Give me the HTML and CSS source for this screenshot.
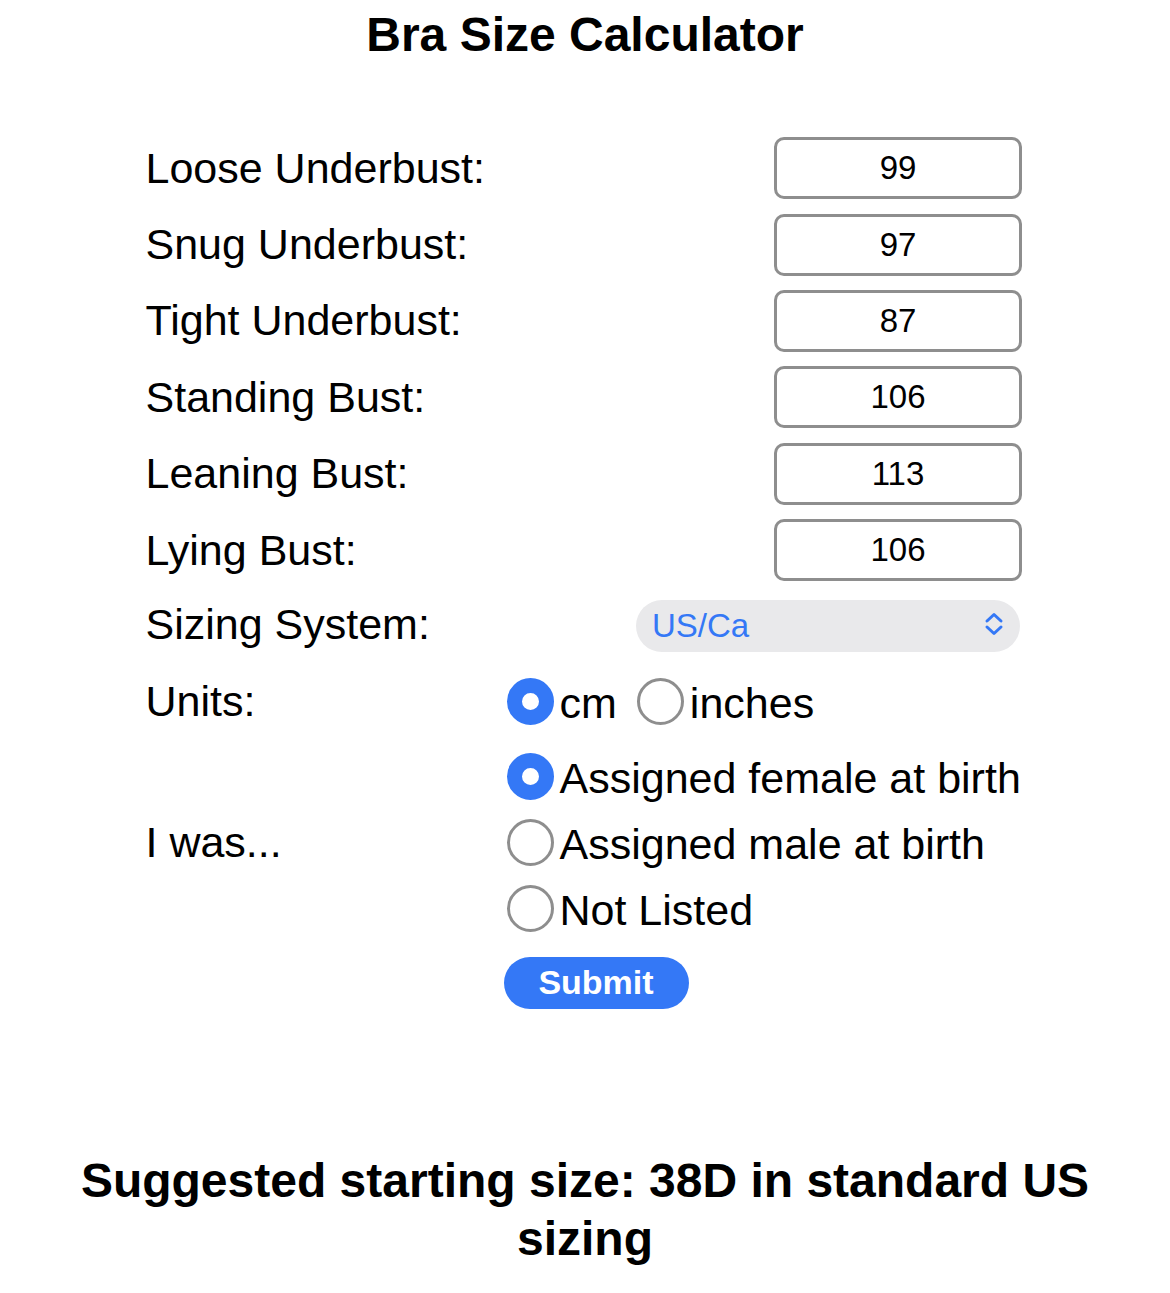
FILE: index.html
```html
<!DOCTYPE html>
<html lang="en">
<head>
    <meta charset="UTF-8">
    <meta name="viewport" content="width=device-width, initial-scale=1.0">
    <title>Bra Size Calculator</title>
    <link rel="stylesheet" href="styles.css">
</head>
<body>
    <h1 class="title">Bra Size Calculator</h1>

    <form class="calc-form" onsubmit="return false;">
        <label class="field-label" for="loose">Loose Underbust:</label>
        <div class="field-control"><input type="text" class="measure" id="loose" value="99"></div>

        <label class="field-label" for="snug">Snug Underbust:</label>
        <div class="field-control"><input type="text" class="measure" id="snug" value="97"></div>

        <label class="field-label" for="tight">Tight Underbust:</label>
        <div class="field-control"><input type="text" class="measure" id="tight" value="87"></div>

        <label class="field-label" for="standing">Standing Bust:</label>
        <div class="field-control"><input type="text" class="measure" id="standing" value="106"></div>

        <label class="field-label" for="leaning">Leaning Bust:</label>
        <div class="field-control"><input type="text" class="measure" id="leaning" value="113"></div>

        <label class="field-label" for="lying">Lying Bust:</label>
        <div class="field-control"><input type="text" class="measure" id="lying" value="106"></div>

        <label class="field-label" for="system">Sizing System:</label>
        <div class="field-control">
            <div class="select-wrap">
                <select id="system" class="system-select">
                    <option>US/Ca</option>
                    <option>UK</option>
                    <option>EU</option>
                </select>
                <svg class="select-arrows" width="20" height="26" viewBox="0 0 20 26">
                    <path d="M3 10 L10 3.5 L17 10 M3 16 L10 22.5 L17 16" fill="none" stroke="#3478f6" stroke-width="3" stroke-linecap="round" stroke-linejoin="round"/>
                </svg>
            </div>
        </div>

        <div class="field-label">Units:</div>
        <div class="field-control units">
            <label class="radio-item"><input type="radio" name="units" checked><span>cm</span></label>
            <label class="radio-item"><input type="radio" name="units"><span>inches</span></label>
        </div>

        <div class="field-label">I was...</div>
        <div class="field-control birth">
            <label class="radio-item"><input type="radio" name="birth" checked><span>Assigned female at birth</span></label>
            <label class="radio-item"><input type="radio" name="birth"><span>Assigned male at birth</span></label>
            <label class="radio-item"><input type="radio" name="birth"><span>Not Listed</span></label>
        </div>

        <div></div>
        <div class="field-control submit-row">
            <button type="submit" class="submit-button">Submit</button>
        </div>
    </form>

    <h2 class="result">Suggested starting size: 38D in standard US sizing</h2>
</body>
</html>
```

FILE: styles.css
```css
body {
    font-family: "Liberation Sans", Arial, sans-serif;
    margin: 0;
    padding: 0;
    background-color: #ffffff;
    color: #000000;
}

.title {
    margin: 7px 0 0;
    font-size: 48px;
    line-height: 56px;
    text-align: center;
}

.calc-form {
    width: 879px;
    margin: 67px auto 0;
    display: grid;
    grid-template-columns: 361px 518px;
    grid-template-rows: repeat(6, 76.4px) 71.6px 84px auto auto;
    font-size: 43px;
}

.field-label {
    display: flex;
    align-items: center;
}

.field-control {
    display: flex;
    align-items: center;
    justify-content: flex-end;
    padding-right: 2.5px;
}

.measure {
    box-sizing: border-box;
    width: 248px;
    height: 62px;
    border: 3px solid #8e8e8e;
    border-radius: 10px;
    text-align: center;
    font-family: "Liberation Sans", Arial, sans-serif;
    font-size: 33px;
    color: #000000;
    padding: 0;
}

.select-wrap {
    position: relative;
    width: 384px;
    height: 52px;
    margin-right: 2px;
}

.system-select {
    -webkit-appearance: none;
    appearance: none;
    width: 100%;
    height: 100%;
    border: none;
    border-radius: 26px;
    background-color: #e9e9eb;
    color: #3478f6;
    font-family: "Liberation Sans", Arial, sans-serif;
    font-size: 33px;
    padding: 0 16px;
}

.select-arrows {
    position: absolute;
    right: 16px;
    top: 13px;
    pointer-events: none;
}

.units,
.birth {
    justify-content: flex-start;
}

.birth {
    flex-direction: column;
    align-items: flex-start;
}

.radio-item {
    display: flex;
    align-items: center;
    height: 66px;
    white-space: nowrap;
}

.units .radio-item {
    margin-right: 20px;
}

.radio-item span {
    padding-top: 4px;
}

.radio-item input {
    -webkit-appearance: none;
    appearance: none;
    box-sizing: border-box;
    flex: none;
    width: 47px;
    height: 47px;
    margin: 0 6px 0 0;
    border: 3px solid #8e8e8e;
    border-radius: 50%;
    background: #ffffff;
}

.radio-item input:checked {
    border: 15px solid #3478f6;
}

.submit-row {
    justify-content: flex-start;
    margin-top: 15px;
}

.submit-button {
    height: 52px;
    width: 185px;
    margin-left: -3px;
    border: none;
    border-radius: 26px;
    background-color: #3478f6;
    color: #ffffff;
    font-family: "Liberation Sans", Arial, sans-serif;
    font-weight: bold;
    font-size: 34px;
    cursor: pointer;
}

.result {
    margin: 143px 0 0;
    padding: 0 20px;
    font-size: 48px;
    line-height: 58px;
    text-align: center;
}
```
